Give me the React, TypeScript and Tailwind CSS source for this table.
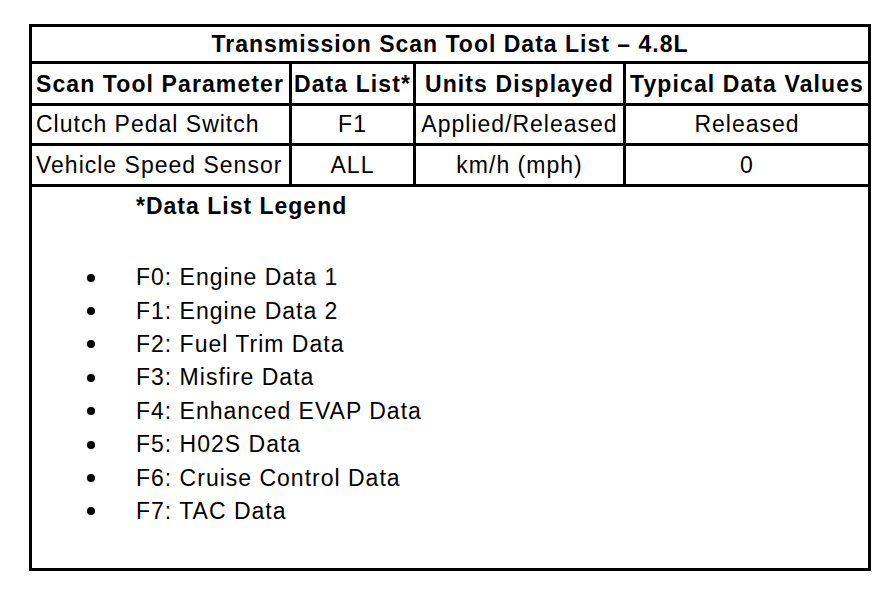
import React from "react";

const rows = [
  ["Clutch Pedal Switch", "F1", "Applied/Released", "Released"],
  ["Vehicle Speed Sensor", "ALL", "km/h (mph)", "0"],
];

const legend = [
  "F0: Engine Data 1",
  "F1: Engine Data 2",
  "F2: Fuel Trim Data",
  "F3: Misfire Data",
  "F4: Enhanced EVAP Data",
  "F5: H02S Data",
  "F6: Cruise Control Data",
  "F7: TAC Data",
];

export default function App() {
  return (
    <div className="w-[896px] h-[604px] bg-white pl-[29px] pt-[24px] font-['Liberation_Sans',Arial,sans-serif] text-black text-[23px] tracking-[1px] leading-none">
      <div className="grid w-[842px] grid-cols-[257px_121px_207px_242px] gap-[3px] bg-black p-[3px]">
        {/* title */}
        <div className="col-span-4 flex h-[34px] items-center justify-center bg-white font-bold tracking-[1px]">
          Transmission Scan Tool Data List – 4.8L
        </div>

        {/* header */}
        <div className="flex h-[39px] items-center bg-white pl-[4px] pt-[2px] font-bold tracking-[1.1px] whitespace-nowrap">Scan Tool Parameter</div>
        <div className="flex h-[39px] items-center justify-center bg-white pt-[2px] font-bold tracking-[1.1px] whitespace-nowrap">Data List*</div>
        <div className="flex h-[39px] items-center justify-center bg-white pt-[2px] font-bold tracking-[1.1px] whitespace-nowrap">Units Displayed</div>
        <div className="flex h-[39px] items-center justify-center bg-white pt-[2px] font-bold tracking-[1.1px] whitespace-nowrap">Typical Data Values</div>

        {rows.map((r, i) => (
          <React.Fragment key={i}>
            <div className={"flex items-center bg-white pl-[4px] whitespace-nowrap " + (i === 0 ? "h-[37px]" : "h-[38px]")}>{r[0]}</div>
            <div className="flex items-center justify-center bg-white whitespace-nowrap">{r[1]}</div>
            <div className="flex items-center justify-center bg-white whitespace-nowrap">{r[2]}</div>
            <div className="flex items-center justify-center bg-white whitespace-nowrap">{r[3]}</div>
          </React.Fragment>
        ))}

        {/* legend */}
        <div className="col-span-4 h-[381px] bg-white">
          <div className="pl-[104px] pt-[8px] font-bold tracking-[1px]">*Data List Legend</div>
          <ul className="mt-[43px]">
            {legend.map((t) => (
              <li key={t} className="flex h-[33.4px] items-center">
                <span className="ml-[55px] mr-[41px] inline-block h-[8px] w-[8px] rounded-full bg-black" />
                <span>{t}</span>
              </li>
            ))}
          </ul>
        </div>
      </div>
    </div>
  );
}
